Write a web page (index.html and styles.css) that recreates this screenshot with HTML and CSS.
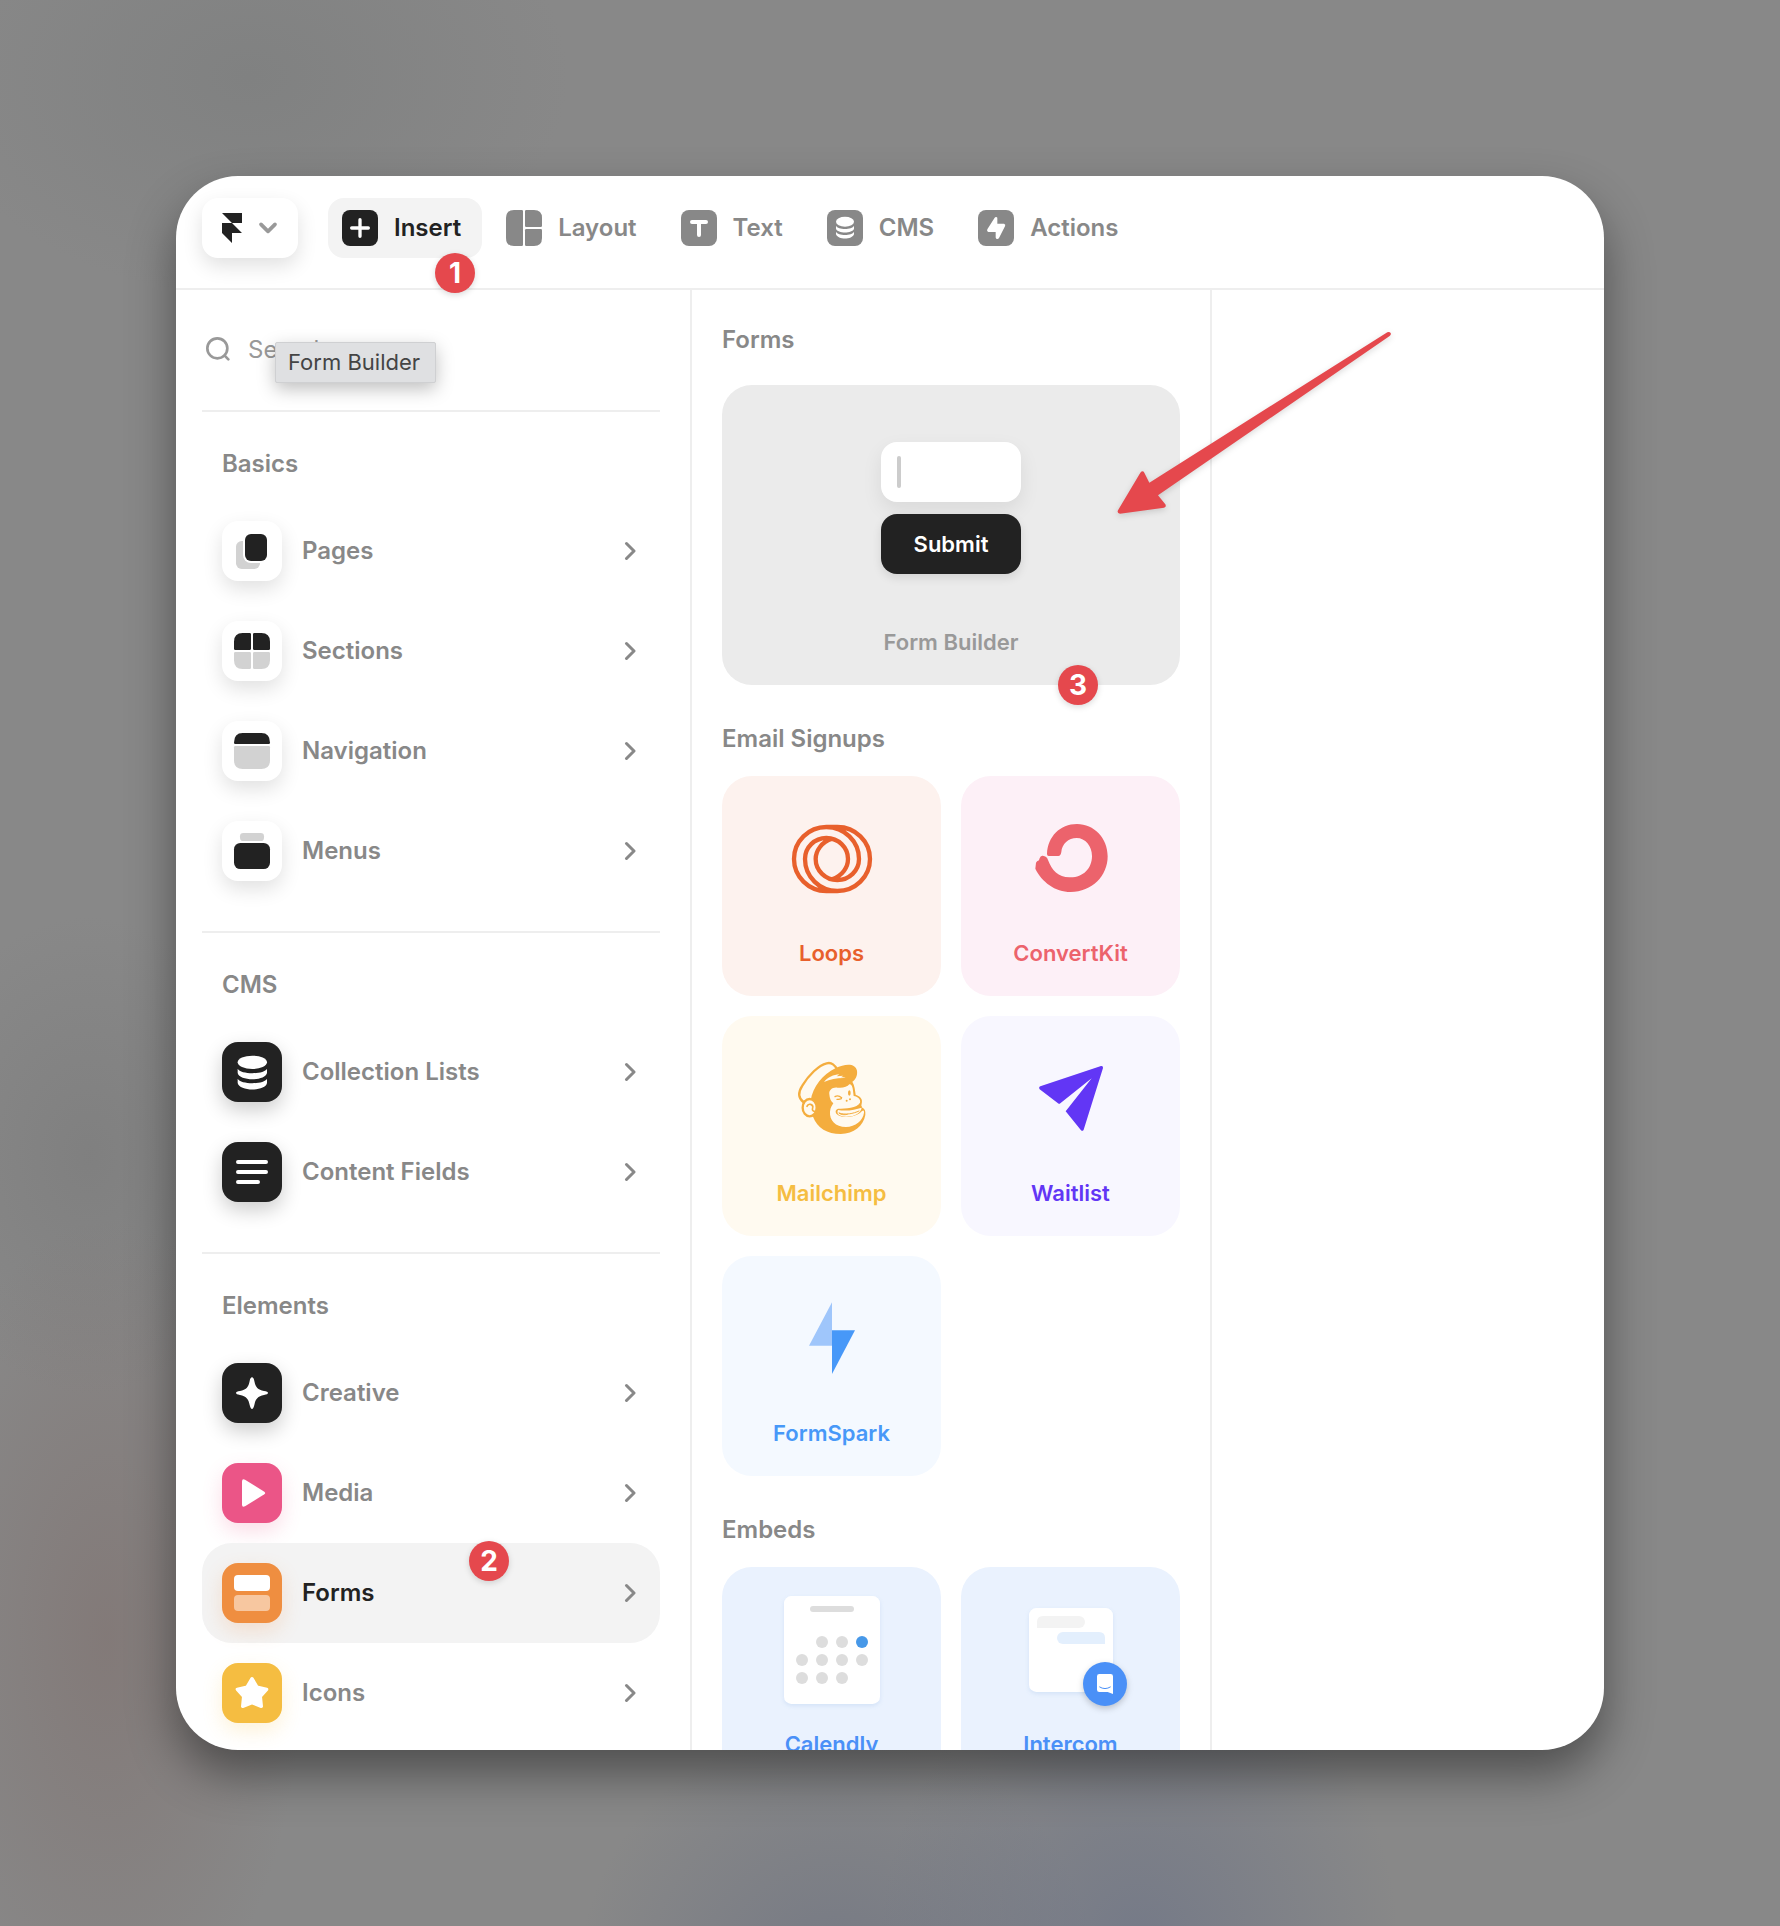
FILE: index.html
```html
<!DOCTYPE html>
<html lang="en">
<head>
<meta charset="utf-8">
<meta name="viewport" content="width=device-width, initial-scale=1">
<title>Insert – Forms</title>
<link rel="stylesheet" href="styles.css">
</head>
<body>
<svg class="defs" aria-hidden="true">
  <symbol id="chevron" viewBox="0 0 12 20"><path d="M2.500 2.500L10 10L2.500 17.500" fill="none" stroke="currentColor" stroke-width="3" stroke-linecap="round" stroke-linejoin="round"/></symbol>
</svg>
<main class="panel">
  <header class="toolbar">
    <button class="logo" type="button" aria-label="Main menu">
      <svg width="20" height="30" viewBox="0 0 60 90"><path d="M0 0H60V30H30ZM0 30H30L60 60H0ZM0 60H30V90Z" fill="#222"/></svg>
      <svg width="20" height="14" viewBox="0 0 60 42"><path d="M9 10L30 31L51 10" fill="none" stroke="#999" stroke-width="11" stroke-linecap="round" stroke-linejoin="round"/></svg>
    </button>
    <nav class="tools" aria-label="Tools">
      <button class="tool tool-active" type="button">
        <svg width="36" height="36" viewBox="0 0 108 108"><rect width="108" height="108" rx="24" fill="#222"/><path d="M54 29V79M29 54H79" stroke="#fff" stroke-width="10" stroke-linecap="round"/></svg>
        Insert
        <span class="badge badge-insert">1</span>
      </button>
      <button class="tool" type="button">
        <svg width="36" height="36" viewBox="0 0 108 108" fill="#888"><path d="M24 0H47Q51 0 51 4V104Q51 108 47 108H24Q0 108 0 84V24Q0 0 24 0Z"/><path d="M61 0H84Q108 0 108 24V47Q108 51 104 51H61Q57 51 57 47V4Q57 0 61 0Z"/><path d="M61 57H104Q108 57 108 61V84Q108 108 84 108H61Q57 108 57 104V61Q57 57 61 57Z"/></svg>
        Layout
      </button>
      <button class="tool" type="button">
        <svg width="36" height="36" viewBox="0 0 108 108"><rect width="108" height="108" rx="24" fill="#888"/><path d="M33 36H75M54 36V75" stroke="#fff" stroke-width="12" stroke-linecap="round"/></svg>
        Text
      </button>
      <button class="tool" type="button">
        <svg width="36" height="36" viewBox="0 0 108 108"><rect width="108" height="108" rx="24" fill="#888"/><g fill="#fff"><ellipse cx="54" cy="35" rx="27" ry="15"/><path d="M27 47C33 60 75 60 81 47V56C76 71 32 71 27 56Z"/><path d="M27 65C33 78 75 78 81 65V73C76 90 32 90 27 73Z"/></g></svg>
        CMS
      </button>
      <button class="tool" type="button">
        <svg width="36" height="36" viewBox="0 0 108 108"><rect width="108" height="108" rx="24" fill="#888"/><path d="M50 23Q53 19 57 22Q58 23 58 26V41H78Q84 43 81 49L63 84Q60 88 55 86Q53 85 53 82V66H31Q25 64 28 58Z" fill="#fff"/></svg>
        Actions
      </button>
    </nav>
  </header>

  <div class="columns">
    <aside class="sidebar">
      <div class="search">
        <svg width="24" height="24" viewBox="0 0 72 72"><circle cx="34" cy="34" r="30" fill="none" stroke="#999" stroke-width="8"/><path d="M56 56L67 67" stroke="#999" stroke-width="8" stroke-linecap="round"/></svg>
        <input class="search-input" type="text" placeholder="Search…" aria-label="Search">
        <span class="tooltip" role="tooltip">Form Builder</span>
      </div>

      <section class="group">
        <h2 class="group-title">Basics</h2>
        <a class="row" href="#pages"><svg class="tile tile-light" viewBox="0 0 180 180"><rect x="42" y="60" width="72" height="84" rx="17" fill="#d2d2d2"/><rect x="63" y="33" width="78" height="93" rx="24" fill="#fff"/><rect x="69" y="39" width="66" height="81" rx="18" fill="#222"/></svg>Pages<svg class="chevron"><use href="#chevron"/></svg></a>
        <a class="row" href="#sections"><svg class="tile tile-light" viewBox="0 0 180 180"><path d="M62 36H83Q87 36 87 40V83Q87 87 83 87H40Q36 87 36 83V62Q36 36 62 36ZM97 36H118Q144 36 144 62V83Q144 87 140 87H97Q93 87 93 83V40Q93 36 97 36Z" fill="#222"/><path d="M40 93H83Q87 93 87 97V140Q87 144 83 144H62Q36 144 36 118V97Q36 93 40 93ZM97 93H140Q144 93 144 97V118Q144 144 118 144H97Q93 144 93 140V97Q93 93 97 93Z" fill="#d2d2d2"/></svg>Sections<svg class="chevron"><use href="#chevron"/></svg></a>
        <a class="row" href="#navigation"><svg class="tile tile-light" viewBox="0 0 180 180"><path d="M62 36H118Q144 36 144 65Q144 69 140 69H40Q36 69 36 65Q36 36 62 36Z" fill="#222"/><path d="M40 75H140Q144 75 144 79V118Q144 144 118 144H62Q36 144 36 118V79Q36 75 40 75Z" fill="#d2d2d2"/></svg>Navigation<svg class="chevron"><use href="#chevron"/></svg></a>
        <a class="row" href="#menus"><svg class="tile tile-light" viewBox="0 0 180 180"><rect x="54" y="36" width="72" height="24" rx="10" fill="#d2d2d2"/><rect x="36" y="66" width="108" height="78" rx="19" fill="#222"/></svg>Menus<svg class="chevron"><use href="#chevron"/></svg></a>
      </section>

      <section class="group">
        <h2 class="group-title">CMS</h2>
        <a class="row" href="#lists"><svg class="tile tile-dark" viewBox="0 0 180 180"><g fill="#fff"><ellipse cx="91" cy="61" rx="44" ry="20"/><path d="M47 80C56 98 126 98 135 80V93C130 118 52 118 47 93Z"/><path d="M47 110C56 128 126 128 135 110V123C130 149 52 149 47 123Z"/></g></svg>Collection Lists<svg class="chevron"><use href="#chevron"/></svg></a>
        <a class="row" href="#fields"><svg class="tile tile-dark" viewBox="0 0 180 180"><path d="M48 60H132M48 90H132M48 120H108" stroke="#fff" stroke-width="12" stroke-linecap="round"/></svg>Content Fields<svg class="chevron"><use href="#chevron"/></svg></a>
      </section>

      <section class="group">
        <h2 class="group-title">Elements</h2>
        <a class="row" href="#creative"><svg class="tile tile-dark" viewBox="0 0 180 180"><path d="M90 43Q95 43 97 54C100 72 108 81 126 84Q138 86 138 90Q138 94 126 96C108 99 100 108 97 126Q94 138 90 138Q86 138 83 126C80 108 72 99 54 96Q42 94 42 90Q42 86 54 84C72 81 80 72 83 54Q85 43 90 43Z" fill="#fff"/></svg>Creative<svg class="chevron"><use href="#chevron"/></svg></a>
        <a class="row" href="#media"><svg class="tile tile-pink" viewBox="0 0 180 180"><path d="M60 56Q60 46 69 50L127 86Q132 90 127 94L69 130Q60 134 60 125Z" fill="#fff"/></svg>Media<svg class="chevron"><use href="#chevron"/></svg></a>
        <a class="row row-active" href="#forms" aria-current="true"><svg class="tile tile-orange" viewBox="0 0 180 180" fill="#fff"><rect x="36" y="36" width="108" height="48" rx="12"/><rect x="36" y="96" width="108" height="48" rx="12" opacity=".5"/></svg>Forms<svg class="chevron"><use href="#chevron"/></svg><span class="badge badge-row">2</span></a>
        <a class="row" href="#icons"><svg class="tile tile-yellow" viewBox="0 0 180 180"><path d="M90 47L105 72L134 79L115 100L118 130L90 119L62 130L65 100L46 79L75 72Z" fill="#fff" stroke="#fff" stroke-width="10" stroke-linejoin="round"/></svg>Icons<svg class="chevron"><use href="#chevron"/></svg></a>
      </section>
    </aside>

    <div class="library">
      <section>
        <h2 class="library-title library-title-first">Forms</h2>
        <div class="builder">
          <label class="field"><span class="caret"></span><input class="field-input" type="text" aria-label="Form field"></label>
          <button class="submit" type="button">Submit</button>
          <span class="builder-name">Form Builder</span>
          <span class="badge badge-builder">3</span>
          <svg class="arrow" viewBox="0 0 930 660" aria-hidden="true"><path d="M862 67Q868 64 872 69Q874 74 869 78L174 556L196 583Q200 591 192 593L60 611Q50 610 54 601L121 488Q128 480 133 488L148 518Z" fill="#e5484d"/></svg>
        </div>
      </section>

      <section>
        <h2 class="library-title">Email Signups</h2>
        <div class="cards">
          <button class="card card-loops" type="button">
            <svg class="art" viewBox="156 228 417 420"><path d="M382 321H349A97 96 0 0 0 252 417A97 96 0 0 0 349 513H382A98 96 0 0 0 480 417A98 96 0 0 0 382 321M349 321A98 96 0 0 1 447 417A65 63 0 0 1 382 480A65 63 0 0 1 317 417C317 392 335 366 366 356M382 513A97 96 0 0 1 285 417A64 63 0 0 1 349 354A65 63 0 0 1 414 417C414 442 397 468 366 478" fill="none" stroke="currentColor" stroke-width="13"/></svg>
            Loops
          </button>
          <button class="card card-convertkit" type="button">
            <svg class="art" viewBox="873 228 417 420"><path d="M1011 402C1013 350 1050 312 1101 312C1152 312 1193 354 1193 409C1193 468 1146 516 1082 516C1035 516 995 485 976 446L978 428Q980 424 987 421C990 409 994 407 998 407C1006 408 1012 412 1014 420C1025 450 1045 472 1078 472C1118 474 1146 446 1146 408C1146 378 1126 354 1100 354C1075 354 1056 372 1054 396Q1052 408 1045 408H1016Q1011 408 1011 402Z" fill="currentColor"/></svg>
            ConvertKit
          </button>
          <button class="card card-mailchimp" type="button">
            <svg class="art" viewBox="-54 -12 417 420" fill="none" stroke="#f4ad3e" stroke-linecap="round" stroke-linejoin="round">
              <path d="M70 186C52 172 56 154 67 137C86 105 116 76 140 70C156 66 164 76 172 88L95 180Z" fill="#fffaf0" stroke-width="7"/>
              <path d="M92 182C98 140 130 102 166 85C196 70 226 69 231 92C233 108 226 119 217 125C224 136 225 151 227 164C241 169 249 177 245 191Q242 196 247 203Q258 207 256 225C250 257 222 282 182 282C142 282 112 264 99 230Z" fill="#f4ad3e" stroke="none"/>
              <path d="M132 126C143 112 161 104 178 103L170 109L190 107L183 112Q192 111 197 114C174 113 152 117 132 126Z" fill="#fffaf0" stroke="none"/>
              <path d="M148 163C146 150 158 141 172 143C188 145 202 141 208 133C215 132 218 142 219 152L221 168C233 170 243 178 240 188C232 204 196 206 174 206C168 208 165 213 168 220C178 236 226 236 246 213Q253 208 252 218C249 242 226 260 198 261C166 261 148 240 150 215C151 202 157 196 160 190C152 184 149 174 148 163Z" fill="#fffaf0" stroke="none"/>
              <path d="M174 210C200 215 226 209 245 203C242 220 222 231 196 230C180 229 168 223 174 210Z" fill="#fffaf0" stroke="none"/>
              <path d="M177 219C196 226 220 221 237 213M178 220Q187 227 202 223" stroke-width="3"/>
              <path d="M165 170Q174 164 185 173M171 178Q178 179 184 176" stroke-width="4"/>
              <ellipse cx="208" cy="159" rx="2" ry="6" stroke-width="4"/>
              <path d="M200 182V182M210 178V178" stroke-width="6"/>
              <ellipse cx="89" cy="203" rx="21" ry="26" fill="#fffaf0" stroke-width="7"/>
              <path d="M81 199C85 188 101 193 98 204Q95 212 103 214" stroke-width="5"/>
            </svg>
            Mailchimp
          </button>
          <button class="card card-waitlist" type="button">
            <svg class="art" viewBox="873 78 417 420"><path d="M991 229L1173 168Q1180 167 1179 174L1121 359Q1118 365 1113 361L1067 304L1145 205L1051 280Q1048 283 1044 280L989 238Q985 232 991 229Z" fill="currentColor"/></svg>
            Waitlist
          </button>
          <button class="card card-formspark" type="button">
            <svg class="art" viewBox="156 108 417 420"><path d="M366 187V317H297Z" fill="#9fc6fb"/><path d="M366 271H435L366 402Z" fill="currentColor"/></svg>
            FormSpark
          </button>
        </div>
      </section>

      <section>
        <h2 class="library-title">Embeds</h2>
        <div class="cards">
          <button class="card card-embed" type="button">
            <svg class="art" viewBox="156 1038 417 420">
              <rect class="sheet" x="222" y="1065" width="288" height="324" rx="22" fill="#fff"/>
              <rect x="300" y="1095" width="132" height="18" rx="9" fill="#ddd"/>
              <g fill="#ddd"><circle cx="336" cy="1203" r="18"/><circle cx="396" cy="1203" r="18"/><circle cx="276" cy="1257" r="18"/><circle cx="336" cy="1257" r="18"/><circle cx="396" cy="1257" r="18"/><circle cx="456" cy="1257" r="18"/><circle cx="276" cy="1311" r="18"/><circle cx="336" cy="1311" r="18"/><circle cx="396" cy="1311" r="18"/></g>
              <circle cx="456" cy="1203" r="18" fill="#4798e8"/>
            </svg>
            Calendly
          </button>
          <button class="card card-embed" type="button">
            <svg class="art" viewBox="873 1038 417 420">
              <rect class="sheet" x="957" y="1101" width="252" height="252" rx="22" fill="#fff"/>
              <path d="M981 1161V1143Q981 1125 999 1125H1107A18 18 0 0 1 1107 1161Z" fill="#f3f3f3"/>
              <path d="M1185 1209V1191Q1185 1173 1167 1173H1059A18 18 0 0 0 1059 1209Z" fill="#e3effd"/>
              <circle class="bubble" cx="1185" cy="1329" r="66" fill="#4a90f7"/>
              <path d="M1168 1299H1202Q1209 1299 1209 1306V1359L1193 1353H1168Q1161 1353 1161 1346V1306Q1161 1299 1168 1299Z" fill="#fff"/>
              <path d="M1169 1338Q1185 1348 1201 1338" fill="none" stroke="#4a90f7" stroke-width="3" stroke-linecap="round"/>
            </svg>
            Intercom
          </button>
        </div>
      </section>
    </div>
    <div class="canvas"></div>
  </div>
</main>
</body>
</html>
```
FILE: styles.css
```css
* {
  box-sizing: border-box;
}

body {
  margin: 0;
  height: 100vh;
  padding: 176px;
  display: flex;
  overflow: hidden;
  font-family: Inter, "Liberation Sans", sans-serif;
  font-size: 24px;
  line-height: 30px;
  font-weight: 600;
  color: #888;
  background:
    radial-gradient(ellipse 200px 420px at 6% 85%, rgba(122, 100, 96, 0.4), transparent),
    radial-gradient(ellipse 180px 240px at 5% 60%, rgba(115, 115, 115, 0.4), transparent),
    radial-gradient(ellipse 260px 300px at 64% 101%, rgba(98, 108, 135, 0.5), transparent),
    radial-gradient(ellipse 260px 260px at 47% 103%, rgba(98, 106, 128, 0.5), transparent),
    radial-gradient(ellipse 320px 220px at 14% 4%, rgba(120, 122, 122, 0.5), transparent),
    #888;
}

button,
input {
  font: inherit;
  color: inherit;
  border: 0;
  margin: 0;
  padding: 0;
  background: none;
}

h2 {
  margin: 0;
  font-size: 24px;
  font-weight: 600;
}

.defs {
  position: absolute;
  width: 0;
  height: 0;
}

.panel {
  flex: 1;
  min-width: 0;
  display: flex;
  flex-direction: column;
  overflow: hidden;
  border-radius: 62px;
  background: #fff;
  box-shadow: 0 24px 48px rgba(0, 0, 0, 0.42);
}

/* Toolbar */

.toolbar {
  flex: none;
  display: flex;
  gap: 30px;
  padding: 22px 26px 30px;
  border-bottom: 2px solid #eee;
}

.logo {
  display: flex;
  align-items: center;
  gap: 16px;
  height: 60px;
  padding: 0 20px;
  border-radius: 16px;
  background: #fff;
  box-shadow: 0 8px 20px rgba(0, 0, 0, 0.12);
}

.tools {
  display: flex;
  gap: 10px;
}

.tool {
  position: relative;
  display: flex;
  align-items: center;
  gap: 16px;
  height: 60px;
  padding: 0 20px 0 14px;
  border-radius: 16px;
}

.tool-active {
  padding-right: 21px;
  color: #222;
  background: #f3f3f3;
}

.badge {
  position: absolute;
  z-index: 2;
  width: 40px;
  height: 40px;
  border-radius: 50%;
  background: #e5484d;
  box-shadow: 0 2px 6px rgba(0, 0, 0, 0.15);
  color: #fff;
  font-size: 28px;
  font-weight: 700;
  line-height: 40px;
  text-align: center;
}

.badge-insert {
  right: 7px;
  bottom: -35px;
}

.badge-row {
  right: 151px;
  top: -2px;
}

.badge-builder {
  right: 82px;
  bottom: -20px;
}

/* Columns */

.columns {
  flex: 1;
  min-height: 0;
  display: grid;
  grid-template-columns: 516px 520px 1fr;
}

.sidebar {
  padding: 0 30px 0 26px;
  border-right: 2px solid #eee;
}

.search {
  position: relative;
  display: flex;
  align-items: center;
  gap: 18px;
  height: 120px;
  padding: 0 0 2px 4px;
}

.search-input {
  flex: 1;
  min-width: 0;
  height: 40px;
  font-weight: 400;
}

.search-input::placeholder {
  color: #999;
  opacity: 1;
}

.tooltip {
  position: absolute;
  left: 73px;
  top: 52px;
  padding: 4px 15px 5px 12px;
  border: 1px solid #cfd0d2;
  border-radius: 2px;
  background: #dfe0e2;
  box-shadow: 0 6px 18px rgba(0, 0, 0, 0.25);
  color: #444;
  font-size: 22px;
  font-weight: 400;
}

.group {
  padding-bottom: 30px;
  border-top: 2px solid #eee;
}

.group-title {
  padding: 37px 20px 22px;
}

.row {
  position: relative;
  display: flex;
  align-items: center;
  gap: 20px;
  height: 100px;
  padding: 0 24px 0 20px;
  border-radius: 30px;
  color: #888;
  text-decoration: none;
}

.row-active {
  color: #222;
  background: #f3f3f3;
}

.tile {
  flex: none;
  width: 60px;
  height: 60px;
  border-radius: 16px;
}

.tile-light {
  background: #fff;
  box-shadow: 0 8px 20px rgba(0, 0, 0, 0.12);
}

.tile-dark {
  background: #222;
  box-shadow: 0 8px 20px rgba(0, 0, 0, 0.2);
}

.tile-pink {
  background: #eb5587;
  box-shadow: 0 8px 20px rgba(235, 85, 135, 0.2);
}

.tile-orange {
  background: #ef8e40;
  box-shadow: 0 8px 20px rgba(239, 142, 64, 0.2);
}

.tile-yellow {
  background: #f5bd41;
  box-shadow: 0 8px 20px rgba(245, 189, 65, 0.2);
}

.chevron {
  width: 12px;
  height: 20px;
  margin-left: auto;
  color: #888;
}

/* Library */

.library {
  position: relative;
  z-index: 1;
  padding: 0 30px;
  border-right: 2px solid #eee;
}

.library-title {
  padding: 39px 0 22px;
}

.library-title-first {
  padding: 35px 0 30px;
}

.builder {
  position: relative;
  display: flex;
  flex-direction: column;
  align-items: center;
  height: 300px;
  padding-top: 57px;
  border-radius: 30px;
  background: #ebebeb;
  font-size: 22px;
}

.field {
  display: flex;
  align-items: center;
  width: 140px;
  height: 60px;
  padding: 0 16px;
  border-radius: 16px;
  background: #fff;
  box-shadow: 0 8px 20px rgba(0, 0, 0, 0.08);
}

.caret {
  flex: none;
  width: 4px;
  height: 32px;
  border-radius: 2px;
  background: #ccc;
}

.field-input {
  width: 100%;
  min-width: 0;
  height: 32px;
}

.submit {
  width: 140px;
  height: 60px;
  margin-top: 12px;
  border-radius: 16px;
  background: #222;
  box-shadow: 0 4px 10px rgba(0, 0, 0, 0.1);
  color: #fff;
}

.builder-name {
  margin-top: 53px;
  color: #999;
}

.arrow {
  position: absolute;
  left: 378px;
  top: -75px;
  width: 310px;
  height: 220px;
  filter: drop-shadow(0 2px 3px rgba(0, 0, 0, 0.15));
}

.cards {
  display: grid;
  grid-template-columns: 1fr 1fr;
  gap: 20px;
}

.card {
  display: flex;
  flex-direction: column;
  align-items: center;
  height: 220px;
  padding-top: 20px;
  border-radius: 30px;
  font-size: 22px;
  line-height: 34px;
}

.art {
  width: 139px;
  height: 140px;
}

.card-loops {
  color: #e8602c;
  background: #fdf2ee;
}

.card-convertkit {
  color: #ec636c;
  background: #fdf0f7;
}

.card-mailchimp {
  color: #f5bd42;
  background: #fffaf0;
}

.card-waitlist {
  color: #6236f5;
  background: #f8f7ff;
}

.card-formspark {
  color: #4798f8;
  background: #f4f9ff;
}

.card-embed {
  color: #4a90f7;
  background: #eaf2fe;
}

.sheet {
  filter: drop-shadow(0 6px 6px rgba(60, 120, 200, 0.12));
}

.bubble {
  filter: drop-shadow(0 8px 10px rgba(0, 0, 0, 0.2));
}
```
